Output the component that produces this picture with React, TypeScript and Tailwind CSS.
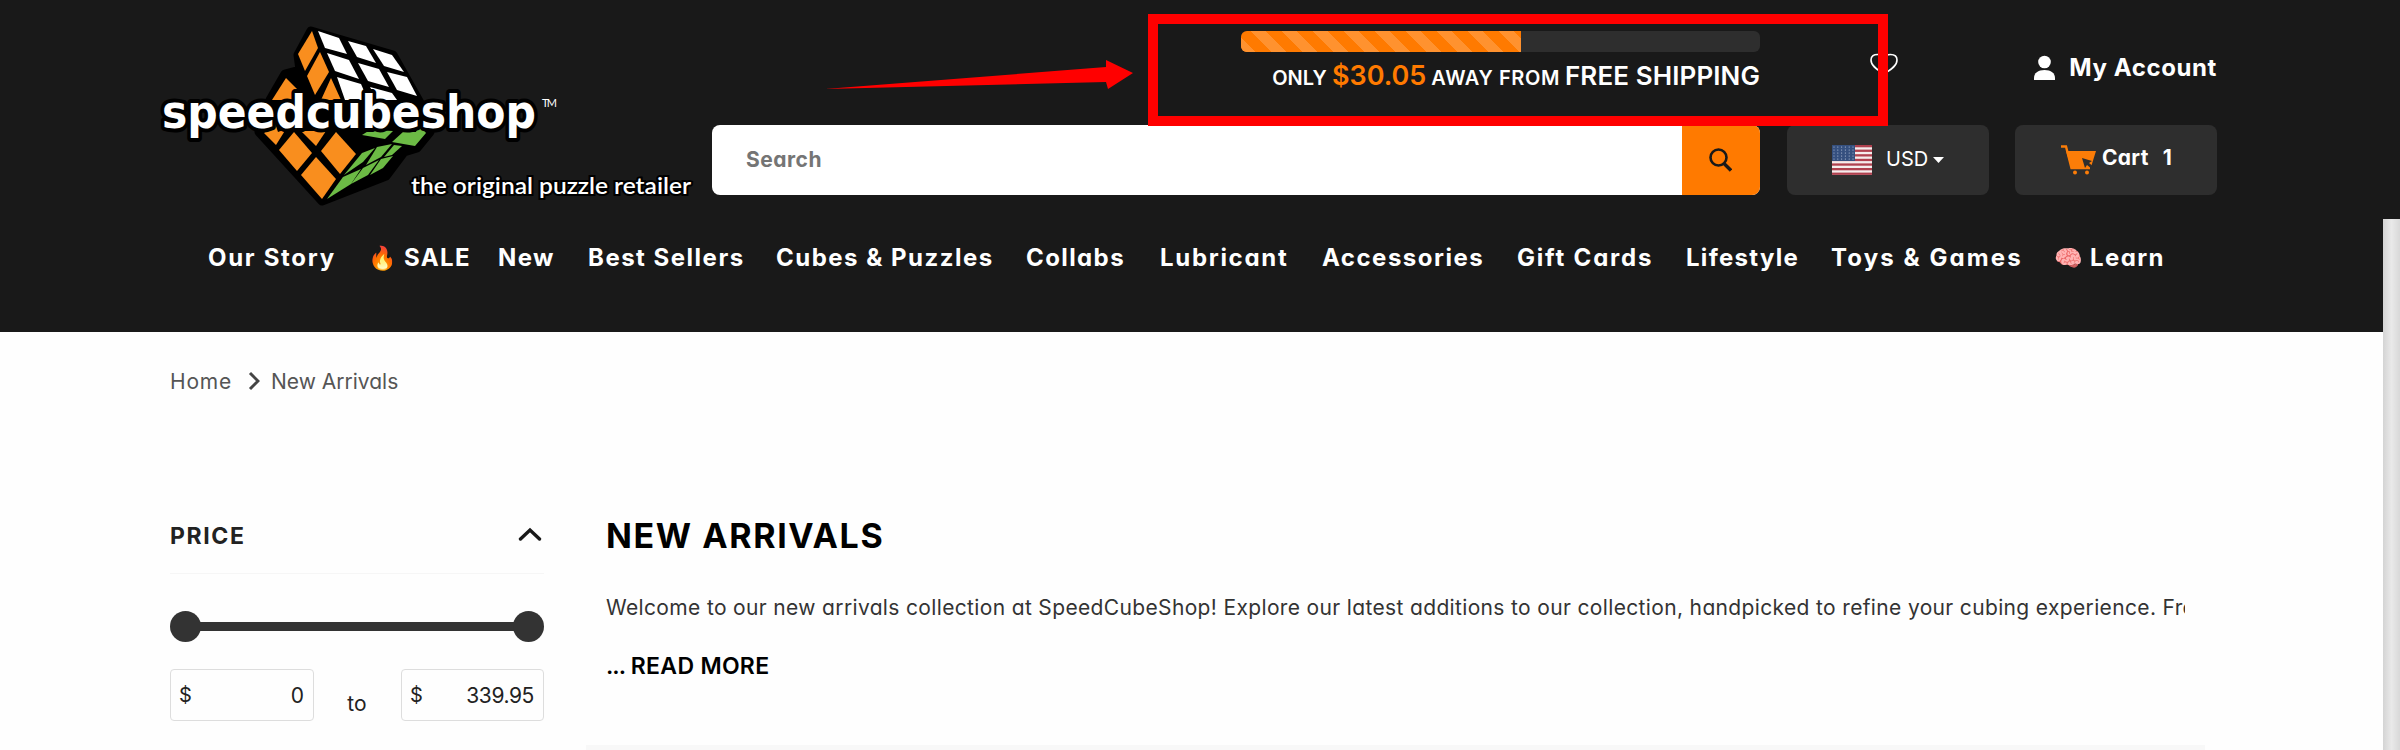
const navItems = [
    { label: 'Our Story', className: 'w-[126px] tracking-[1.700px]' },
    { label: 'SALE', icon: '🔥', className: 'w-[98px] pl-[1px] tracking-[1.400px]' },
    { label: 'New', className: 'w-[57px] tracking-[1.400px]' },
    { label: 'Best Sellers', className: 'w-[155px] tracking-[1.500px]' },
    { label: 'Cubes & Puzzles', className: 'w-[217px] tracking-[1.500px]' },
    { label: 'Collabs', className: 'w-[101px] tracking-[1.400px]' },
    { label: 'Lubricant', className: 'w-[129px] tracking-[1.700px]' },
    { label: 'Accessories', className: 'w-[162px] tracking-[1.500px]' },
    { label: 'Gift Cards', className: 'w-[136px] tracking-[1.800px]' },
    { label: 'Lifestyle', className: 'w-[112px] tracking-[1.300px]' },
    { label: 'Toys & Games', className: 'w-[190px] tracking-[2.100px]' },
    { label: 'Learn', icon: '🧠', className: 'w-[114px] tracking-[1.400px]' },
];

const Logo = () => (
    <svg className="mt-[10px] h-[200px] w-[562px]" viewBox="0 0 562 200">
        <g transform="translate(0 10)">
            <path
                d="M161 11 L243 35 L274 90 L280 112 L267 128 L254 132 L236 156 L172 181 L109 112 L120 80 L135 54 L150 50 L148 35 Z"
                fill="#000"
                stroke="#000"
                strokeWidth="9"
                strokeLinejoin="round"
            />
            <g fill="#f98e1e">
                <path d="M162 11 L168 28 L155 51 L148 34 Z" />
                <path d="M170 32 L179 52 L165 75 L157 56 Z" />
                <path d="M181 58 L191 80 H171 Z" />
                <path d="M136 58 L148 70 L142 80 H122 Z" />
                <path d="M125 103 L128 112 L136 109 L126 125 L114 113 Z" />
                <path d="M144 112 L162 133 L147 151 L129 130 Z" />
                <path d="M151 111 H176 L166 126 Z" />
                <path d="M186 112 L206 134 L190 154 L171 131 Z" />
                <path d="M166 137 L186 159 L172 179 L151 155 Z" />
            </g>
            <g fill="#fff">
                <path d="M168 11 L189 18 L197 34 L175 28 Z" />
                <path d="M198 21 L216 26 L226 43 L207 37 Z" />
                <path d="M223 29 L242 35 L254 52 L234 46 Z" />
                <path d="M177 33 L199 40 L209 59 L185 51 Z" />
                <path d="M208 43 L229 49 L239 67 L218 61 Z" />
                <path d="M237 52 L257 57 L267 76 L247 70 Z" />
                <path d="M187 57 L211 64 L218 80 H195 Z" />
                <path d="M220 67 L242 73 L247 80 H227 Z" />
            </g>
            <g fill="#6cbb45">
                <path d="M220 110 L243 111 L235 119 L212 115 Z" />
                <path d="M253 112 H266 L269 104 L276 113 L265 126 L242 122 Z" />
                <path d="M212 133 L225 128 L213 142 L194 155 Z" />
                <path d="M227 127 L242 124 L231 137 L216 145 Z" />
                <path d="M244 125 L252 126 L242 135 L234 137 Z" />
                <path d="M193 157 L211 149 L201 164 L177 179 Z" />
                <path d="M213 148 L229 140 L218 155 L201 164 Z" />
                <path d="M231 139 L243 136 L233 148 L220 155 Z" />
            </g>
        </g>
        <text
            x="12"
            y="118"
            fontFamily="'DejaVu Sans', sans-serif"
            fontWeight="700"
            fontSize="47"
            fill="#fff"
            stroke="#000"
            strokeWidth="8"
            strokeLinejoin="round"
            paintOrder="stroke"
            textLength="374"
            lengthAdjust="spacingAndGlyphs"
        >
            speedcubeshop
        </text>
        <text x="392" y="97" fill="#fff" fontSize="11" textLength="15" fontFamily="Lato, sans-serif">TM</text>
        <text
            x="261"
            y="184"
            fill="#fff"
            stroke="#000"
            strokeWidth="4"
            paintOrder="stroke"
            fontSize="23"
            fontWeight="600"
            fontFamily="Lato, sans-serif"
            textLength="280"
            lengthAdjust="spacingAndGlyphs"
        >
            the original puzzle retailer
        </text>
    </svg>
);

const Flag = () => (
    <svg className="h-[30px] w-10" viewBox="0 0 40 30" preserveAspectRatio="none">
        <rect width="40" height="30" fill="#f5eded" />
        {[0, 1, 2, 3, 4, 5, 6].map((i) => (
            <rect key={i} y={i * 4.6} width="40" height="2.3" fill="#b0414f" />
        ))}
        <rect width="23" height="16" fill="#35507f" />
        {[0, 1, 2, 3, 4].map((row) =>
            [0, 1, 2, 3, 4, 5].map((col) => (
                <circle key={`${row}-${col}`} cx={2 + col * 3.8} cy={2 + row * 3} r="0.6" fill="#b7c4da" />
            ))
        )}
    </svg>
);

const CartIcon = () => (
    <svg className="h-[30px] w-[36px]" viewBox="0 0 36 30">
        <path d="M0 1.500 H5 L10.500 23 H29" fill="none" stroke="#fc7d08" strokeWidth="2.400" />
        <path d="M5 6 H35 L30 22 H10 Z" fill="#fc7d08" />
        <circle cx="14" cy="27.500" r="2" fill="#fc7d08" />
        <circle cx="26" cy="27.500" r="2" fill="#fc7d08" />
        <path d="M21 13 L31 16 L28 18 L33 22 L31 24 L26 20 L24 23 Z" fill="#2e2e2e" />
    </svg>
);

const Header = () => (
    <header className="h-[332px] w-full bg-[#191919] text-white">
        <div className="flex h-[210px]">
            <div className="w-[712px] pl-[150px]">
                <Logo />
            </div>
            <div className="w-[1505px]">
                <div className="flex h-[125px] justify-between">
                    <div className="flex w-[1048px] flex-col items-end pt-[31px]">
                        <div className="h-[21px] w-[519px] overflow-hidden rounded-md bg-[#2e2e2e]">
                            <div className="h-full w-[280px] bg-[#ff7a00] bg-[linear-gradient(45deg,#ff922f_25%,transparent_25%,transparent_50%,#ff922f_50%,#ff922f_75%,transparent_75%)] bg-[length:31px_31px] bg-[position:9px_0]" />
                        </div>
                        <div className="mt-[6px] flex items-baseline gap-[5px] leading-9 font-semibold whitespace-nowrap">
                            <span className="text-xl">ONLY</span>
                            <span className="text-[27px] text-[#ff7a00]">$30.05</span>
                            <span className="text-xl tracking-[0.600px]">AWAY FROM</span>
                            <span className="text-[26px] tracking-[0.100px]">FREE SHIPPING</span>
                        </div>
                    </div>
                    <div className="flex w-[347px] justify-between pt-[53px]">
                        <svg className="h-6 w-[28px]" viewBox="0 0 28 24">
                            <path
                                d="M14 21 C10 18 1 14 1 7 C1 3 4 1.500 7.500 1.500 C11 1.500 13 3 14 6 C15 3 17 1.500 20.500 1.500 C24 1.500 27 3 27 7 C27 14 18 18 14 21 Z"
                                fill="none"
                                stroke="#fff"
                                strokeWidth="1.6"
                            />
                        </svg>
                        <div className="flex h-[30px] items-center gap-[14px]">
                            <svg className="h-[26px] w-[21px]" viewBox="0 0 21 26">
                                <circle cx="10.500" cy="7" r="6.300" fill="#fff" />
                                <path d="M0 25 V23 C0 18 4 15 10.500 15 C17 15 21 18 21 23 V25 Z" fill="#fff" />
                            </svg>
                            <span className="text-2xl font-bold tracking-[0.600px] whitespace-nowrap">My Account</span>
                        </div>
                    </div>
                </div>
                <div className="flex h-[70px]">
                    <div className="flex w-[1048px] overflow-hidden rounded-lg bg-white">
                        <div className="flex flex-1 items-center pl-[34px] text-[21px] font-bold tracking-[0.500px] text-[#757575]">
                            Search
                        </div>
                        <button className="flex w-[78px] items-center justify-center bg-[#ff7a00] pr-[2px]">
                            <svg className="h-6 w-6" viewBox="0 0 24 24" fill="none" stroke="#191919">
                                <circle cx="10.500" cy="9.500" r="8" strokeWidth="2.600" />
                                <path d="M16 15.500 L23 22.500" strokeWidth="3.400" />
                            </svg>
                        </button>
                    </div>
                    <div className="ml-[27px] flex w-[202px] items-center rounded-lg bg-[#2e2e2e] pl-[45px] text-xl">
                        <Flag />
                        <span className="ml-[14px] pb-[3px]">USD</span>
                        <svg className="ml-[5px] h-[6px] w-[11px]" viewBox="0 0 11 6">
                            <path d="M0 0 H11 L5.500 6 Z" fill="#fff" />
                        </svg>
                    </div>
                    <div className="ml-[26px] flex w-[202px] items-center rounded-lg bg-[#2e2e2e] pl-[46px] text-[21px] font-bold">
                        <CartIcon />
                        <span className="ml-[5px] pb-[4px] tracking-[0.300px]">Cart</span>
                        <span className="ml-[14px] pb-[4px]">1</span>
                    </div>
                </div>
            </div>
        </div>
        <nav className="flex gap-[33px] pt-[31px] pl-[208px] text-2xl leading-[34px] font-bold whitespace-nowrap">
            {navItems.map((item) => (
                <a key={item.label} className={`flex shrink-0 items-center ${item.className}`}>
                    {item.icon && <span className="w-9 shrink-0 text-[23px] tracking-normal">{item.icon}</span>}
                    {item.label}
                </a>
            ))}
        </nav>
    </header>
);

const PriceFilter = () => (
    <aside className="w-[374px]">
        <div className="flex h-[76px] items-center justify-between border-b border-[#f6f6f6] text-[23px] font-bold text-[#222]">
            <span className="pt-[1px] tracking-[1.600px]">PRICE</span>
            <svg className="mr-[2px] mb-[3px] h-[14px] w-6" viewBox="0 0 24 14">
                <path d="M2.500 12 L12 3 L21.500 12" fill="none" stroke="#191919" strokeWidth="3.400" strokeLinecap="round" />
            </svg>
        </div>
        <div className="mt-[37px] flex h-[31px] items-center">
            <div className="size-[31px] rounded-full bg-[#333]" />
            <div className="-mx-1 h-[9px] flex-1 bg-[#333]" />
            <div className="size-[31px] rounded-full bg-[#333]" />
        </div>
        <div className="mt-[27px] flex justify-between text-[21px] text-[#222]">
            <div className="flex h-[52px] w-[144px] items-center justify-between rounded border border-[#ddd] pr-[9px] pl-[8px]">
                <span className="text-xl">$</span>
                <span className="pt-[2px]">0</span>
            </div>
            <span className="pt-[19px] pr-[1px]">to</span>
            <div className="flex h-[52px] w-[143px] items-center justify-between rounded border border-[#ddd] pr-[9px] pl-[8px]">
                <span className="text-xl">$</span>
                <span className="pt-[2px] tracking-[-0.400px]">339.95</span>
            </div>
        </div>
    </aside>
);

const Collection = () => (
    <main className="ml-[42px] w-[1619px]">
        <div className="h-[247px] px-5">
            <h1 className="pt-[17px] text-[34px] leading-[42px] font-bold tracking-[1.600px] text-black">NEW ARRIVALS</h1>
            <p className="mt-[36px] overflow-hidden text-[21px] leading-[30px] tracking-[0.350px] whitespace-nowrap text-[#333]">
                Welcome to our new arrivals collection at SpeedCubeShop! Explore our latest additions to our collection,
                handpicked to refine your cubing experience. From
            </p>
            <p className="mt-[27px] text-[23px] leading-[32px] font-semibold text-black">
                <span className="tracking-[-1px]">...</span> <span className="tracking-[0.300px]">READ MORE</span>
            </p>
        </div>
        <div className="h-[5px] bg-[#f8f8f8]" />
    </main>
);

export default function App() {
    return (
        <div className="relative h-[750px] w-[2400px] overflow-hidden bg-[#fefefe] font-[Inter,sans-serif] [font-feature-settings:'cv11']">
            <Header />
            <div className="flex h-[98px] items-start pt-[35px] pl-[170px] text-[21px] leading-[30px] text-[#555]">
                <span className="w-[61px] tracking-[0.800px]">Home</span>
                <svg className="mt-[4px] mr-[11px] ml-[17px] h-5 w-3" viewBox="0 0 12 20">
                    <path d="M2 2 L10 10 L2 18" fill="none" stroke="#444" strokeWidth="3" />
                </svg>
                <span>New Arrivals</span>
            </div>
            <div className="flex pt-[68px] pl-[170px]">
                <PriceFilter />
                <Collection />
            </div>

            {/* scrollbar track */}
            <div className="absolute top-[219px] right-0 h-[531px] w-[17px] bg-linear-to-r from-[#d4d4d4] via-[#e9e9e9] to-[#d8d8d8]" />

            {/* callout over the shipping bar */}
            <svg className="absolute top-[55px] left-[820px] h-10 w-[320px]" viewBox="0 0 320 40">
                <path d="M5 34 L286 12 V5 L313 18 L288 34 L286 27 Z" fill="#f00" />
            </svg>
            <div className="absolute top-[14px] left-[1148px] h-[112px] w-[740px] border-10 border-[#f00]" />
        </div>
    );
}
